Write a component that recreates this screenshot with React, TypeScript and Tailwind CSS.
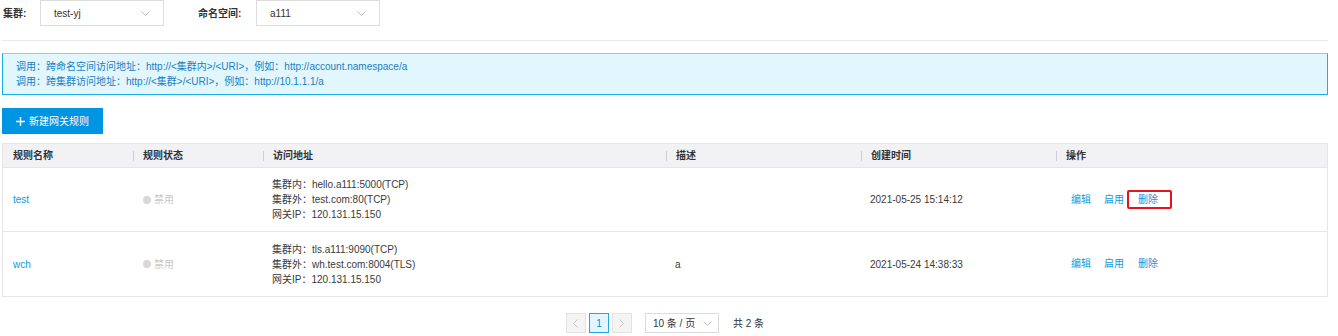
import React from "react";

const rules = [
  {
    name: "test",
    inner: "hello.a111:5000(TCP)",
    outer: "test.com:80(TCP)",
    ip: "120.131.15.150",
    desc: "",
    time: "2021-05-25 15:14:12",
    marked: true,
  },
  {
    name: "wch",
    inner: "tls.a111:9090(TCP)",
    outer: "wh.test.com:8004(TLS)",
    ip: "120.131.15.150",
    desc: "a",
    time: "2021-05-24 14:38:33",
    marked: false,
  },
];

const cols = "grid grid-cols-[130px_130px_403px_195px_195px_271px]";

const Chevron = ({ className }: { className?: string }) => (
  <svg width="9" height="5" viewBox="0 0 9 5" className={className}>
    <path d="M0.5 0.5 L4.5 4.5 L8.5 0.5" fill="none" stroke="#b5b5b5" strokeWidth="0.9" />
  </svg>
);

const Select = ({ value }: { value: string }) => (
  <div className="w-[124px] h-[26px] border border-[#dcdcdc] flex items-center justify-between pl-[13px] pr-[13px] text-[#333]">
    <span>{value}</span>
    <Chevron />
  </div>
);

const HeadCell = ({ label, first }: { label: string; first?: boolean }) => (
  <div className="flex items-center h-full">
    {!first && <span className="w-px h-[10px] bg-[#cfcfcf]" />}
    <span className={first ? "pl-[10px]" : "pl-[9px]"}>{label}</span>
  </div>
);

export default function App() {
  return (
    <div
      className="w-[1338px] h-[336px] overflow-hidden bg-white text-[10px] text-[#333]"
      style={{ fontFamily: '"Liberation Sans", "Noto Sans CJK SC", sans-serif' }}
    >
      <div className="ml-[2px] w-[1326px]">
        {/* filters */}
        <div className="flex items-center h-[26px]">
          <span className="w-[38px] pl-[1px] font-bold">集群:</span>
          <Select value="test-yj" />
          <span className="w-[58px] ml-[34px] font-bold">命名空间:</span>
          <Select value="a111" />
        </div>

        <div className="mt-[14px] h-px bg-[#e9e9e9]" />

        {/* notice */}
        <div className="mt-[12px] border border-[#17b0ea] border-t-[#7dd6f7] bg-[#e2f6fe] py-[5px] pl-[13px] leading-[15px] text-[#1a7fc4]">
          <div>调用：跨命名空间访问地址：http://&lt;集群内&gt;/&lt;URI&gt;，例如：http://account.namespace/a</div>
          <div>调用：跨集群访问地址：http://&lt;集群&gt;/&lt;URI&gt;，例如：http://10.1.1.1/a</div>
        </div>

        <button className="mt-[13px] w-[101px] h-[26px] bg-[#0095e2] text-white flex items-center pl-[14px]">
          <svg width="9" height="9" viewBox="0 0 9 9" className="mr-[4px]">
            <path d="M4.5 0 V9 M0 4.5 H9" stroke="#fff" strokeWidth="1.5" />
          </svg>
          <span>新建网关规则</span>
        </button>

        {/* table */}
        <div className="mt-[9px] border border-[#e6e6e6]">
          <div className={`${cols} h-[24px] bg-[#f2f2f4] font-bold text-[#333] border-b border-[#e6e6e6]`}>
            <HeadCell label="规则名称" first />
            <HeadCell label="规则状态" />
            <HeadCell label="访问地址" />
            <HeadCell label="描述" />
            <HeadCell label="创建时间" />
            <HeadCell label="操作" />
          </div>
          {rules.map((r, i) => (
            <div
              key={r.name}
              className={`${cols} h-[64px] items-center ${i < rules.length - 1 ? "border-b border-[#e6e6e6]" : ""}`}
            >
              <div className="pl-[10px] text-[#0a9ae2]">{r.name}</div>
              <div className="pl-[10px] flex items-center text-[#c8c8c8]">
                <span className="w-[8px] h-[8px] rounded-full bg-[#d8d8d8] mr-[3px]" />
                <span>禁用</span>
              </div>
              <div className="pl-[9px] leading-[15px] text-[#3a3a3a]">
                <div>集群内：{r.inner}</div>
                <div>集群外：{r.outer}</div>
                <div>网关IP：{r.ip}</div>
              </div>
              <div className="pl-[9px] text-[#3a3a3a]">{r.desc}</div>
              <div className="pl-[9px] text-[#3a3a3a]">{r.time}</div>
              <div className="pl-[15px] flex items-center text-[#0a9ae2] leading-[12px]">
                <span className="mr-[13px]">编辑</span>
                <span className="mr-[14px]">启用</span>
                <span className="relative">
                  删除
                  {r.marked && (
                    <span className="absolute -left-[11px] -right-[14px] -top-[4px] -bottom-[3px] border-2 border-[#e8121b] rounded-[2px]" />
                  )}
                </span>
              </div>
            </div>
          ))}
        </div>

        {/* pagination */}
        <div className="mt-[16px] flex items-center justify-center h-[20px]">
          <div className="w-[20px] h-[20px] border border-[#e3e3e3] bg-[#f4f4f4] flex items-center justify-center">
            <svg width="5" height="9" viewBox="0 0 5 9">
              <path d="M4.5 0.5 L0.5 4.5 L4.5 8.5" fill="none" stroke="#c4c4c4" strokeWidth="0.9" />
            </svg>
          </div>
          <div className="ml-[3px] w-[20px] h-[20px] border border-[#22a6e8] bg-[#e3f6fe] text-[#0a8fd8] flex items-center justify-center">
            1
          </div>
          <div className="ml-[3px] w-[20px] h-[20px] border border-[#e3e3e3] bg-[#f4f4f4] flex items-center justify-center">
            <svg width="5" height="9" viewBox="0 0 5 9">
              <path d="M0.5 0.5 L4.5 4.5 L0.5 8.5" fill="none" stroke="#c4c4c4" strokeWidth="0.9" />
            </svg>
          </div>
          <div className="ml-[13px] w-[74px] h-[20px] border border-[#dcdcdc] flex items-center justify-between pl-[7px] pr-[6px] text-[#333]">
            <span>10 条 / 页</span>
            <Chevron />
          </div>
          <span className="ml-[14px] text-[#333]">共 2 条</span>
        </div>
      </div>
    </div>
  );
}
